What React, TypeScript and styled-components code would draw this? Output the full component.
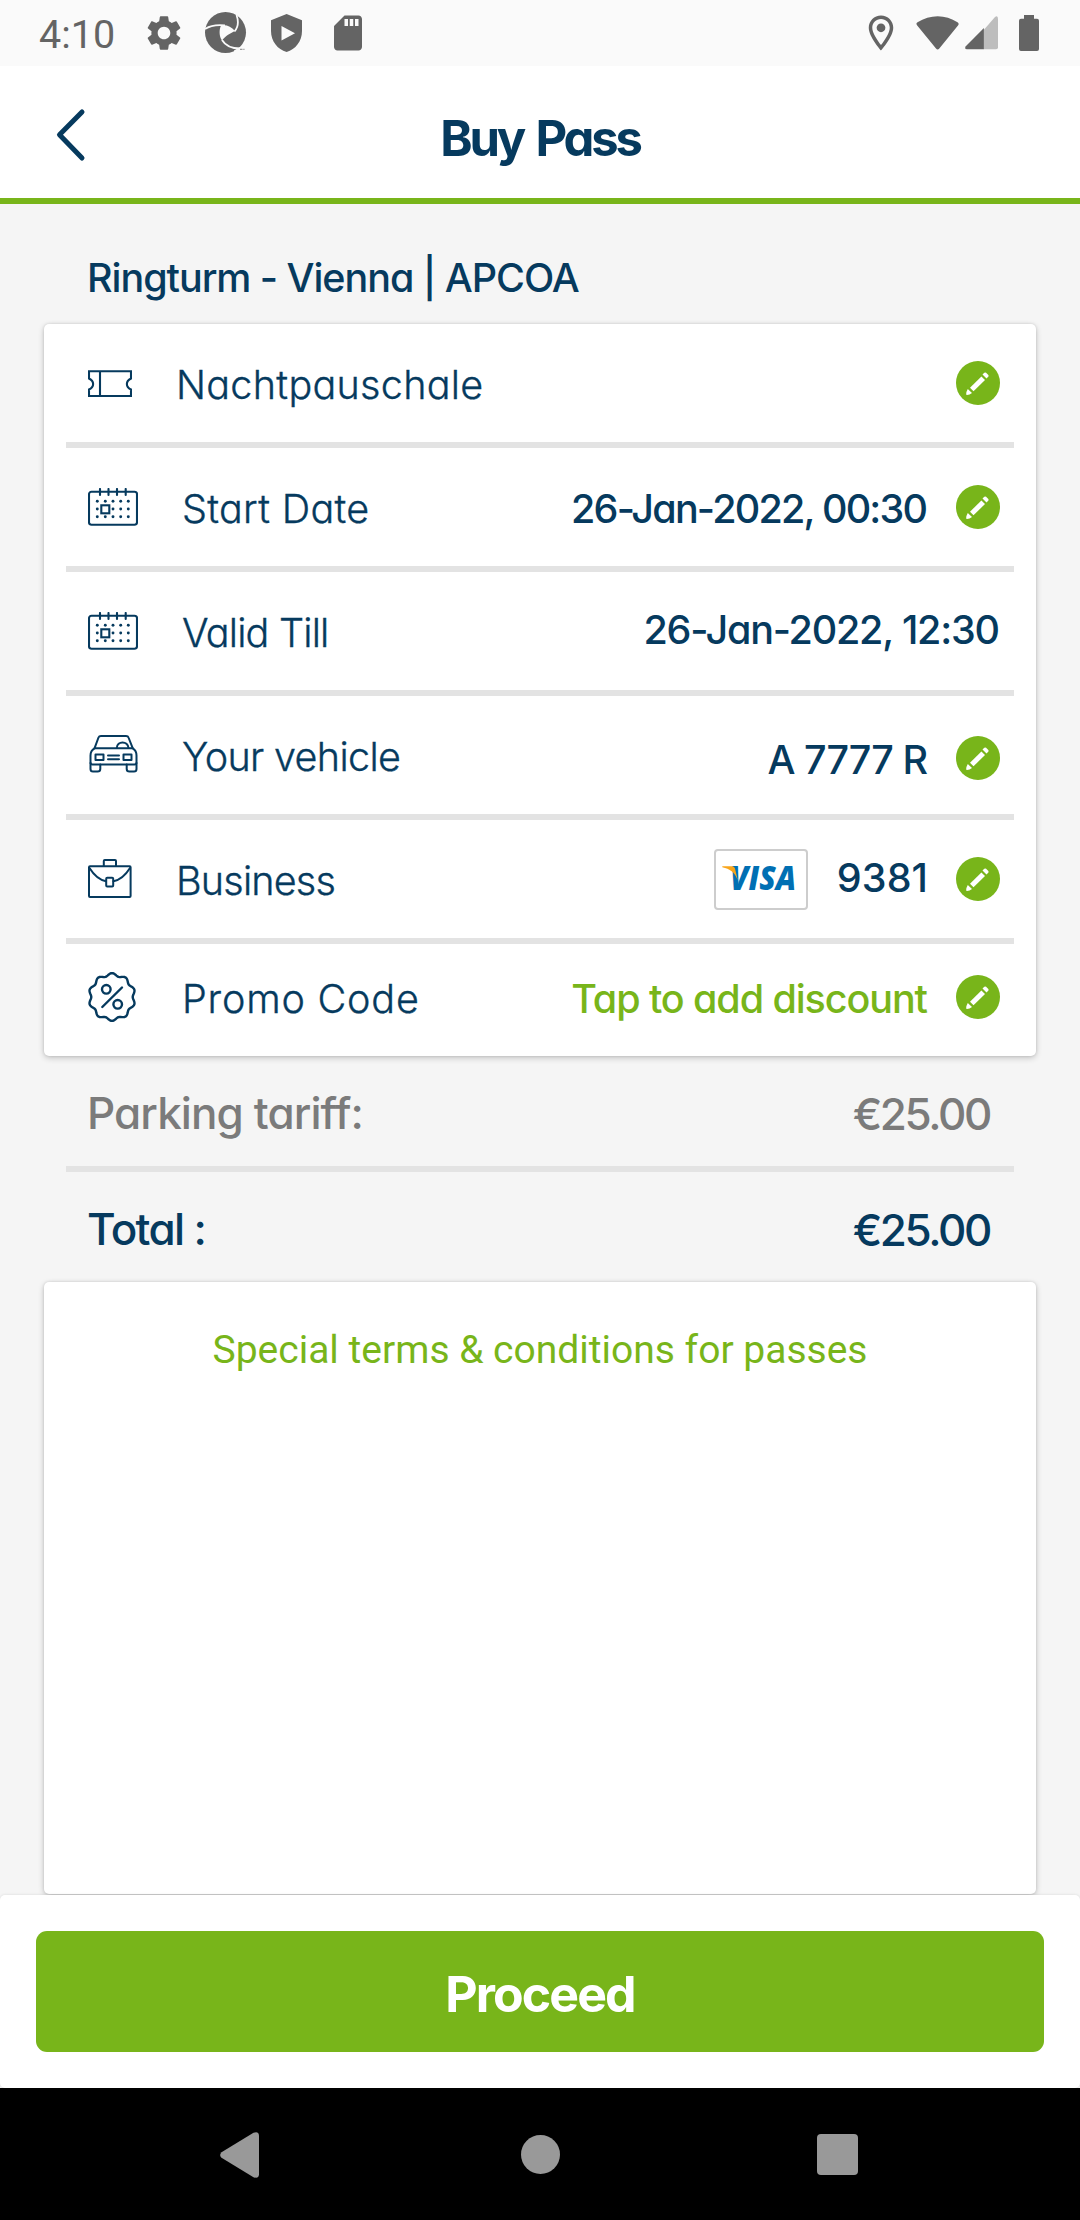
import React from "react";
import styled, { createGlobalStyle } from "styled-components";
import { MdSettings, MdSdCard, MdOutlineLocationOn } from "react-icons/md";

const navy = "#063a5e";
const green = "#78b51a";
const statusGrey = "#646464";

const GlobalStyle = createGlobalStyle`
  *, *::before, *::after { box-sizing: border-box; }
  body { margin: 0; background: #f5f5f5; }
  svg { display: block; flex: none; }
`;

const Screen = styled.div`
  width: 1080px;
  height: 2220px;
  display: flex;
  flex-direction: column;
  overflow: hidden;
  background: #f5f5f5;
  color: ${navy};
  font-family: Inter, "Open Sans", sans-serif;
  font-feature-settings: "cv11";
`;

const StatusBar = styled.div`
  height: 66px;
  flex: none;
  display: flex;
  justify-content: space-between;
  align-items: center;
  padding: 0 41px 0 39px;
  background: #fafafa;
  color: ${statusGrey};
`;

const StatusGroup = styled.div`
  display: flex;
  align-items: center;
`;

const Clock = styled.div`
  width: 104px;
  font: 400 39.5px/48px Roboto, sans-serif;
  padding-top: 3px;
`;

const StatusIcon = styled.span<{ $ml?: number }>`
  display: flex;
  margin-left: ${(p) => p.$ml ?? 0}px;
`;

const Header = styled.header`
  height: 138px;
  flex: none;
  display: grid;
  grid-template-columns: 140px 1fr 140px;
  align-items: start;
  background: #fff;
  border-bottom: 6px solid ${green};
`;

const BackButton = styled.button`
  padding: 41px 0 0 54px;
  border: 0;
  background: none;
`;

const Title = styled.h1`
  margin: 49px 0 0;
  text-align: center;
  font-size: 49px;
  line-height: 48px;
  font-weight: 650;
  letter-spacing: -3.2px;
  word-spacing: 4px;
`;

const Content = styled.main`
  flex: 1;
  min-height: 0;
  display: flex;
  flex-direction: column;
  padding: 0 44px;
`;

const Location = styled.h2`
  height: 120px;
  flex: none;
  margin: 0;
  padding: 50px 43px 0;
  font-size: 39.5px;
  line-height: 48px;
  font-weight: 500;
  letter-spacing: -1.06px;
`;

const Card = styled.section<{ $grow?: boolean }>`
  flex: ${(p) => (p.$grow ? "1" : "none")};
  margin-bottom: ${(p) => (p.$grow ? "1px" : "0")};
  background: #fff;
  border-radius: 5px;
  box-shadow: 0 2px 6px rgba(0, 0, 0, 0.2), 0 0 3px rgba(0, 0, 0, 0.12);
`;

const Row = styled.div<{ $last?: boolean }>`
  height: ${(p) => (p.$last ? 112 : 118)}px;
  display: flex;
  align-items: flex-start;
  padding: 0 36px 0 44px;
`;

const Divider = styled.hr`
  height: 6px;
  flex: none;
  margin: 0 22px;
  border: 0;
  background: #e3e3e3;
`;

const Slot = styled.span<{ $top: number }>`
  display: flex;
  flex: none;
  margin-top: ${(p) => p.$top}px;
`;

const Label = styled.span<{ $top: number; $spacing: number }>`
  flex: 1;
  margin: ${(p) => p.$top}px 0 0 44px;
  font-size: 39.5px;
  line-height: 48px;
  font-weight: 300;
  -webkit-text-stroke: 0.35px ${navy};
  letter-spacing: ${(p) => p.$spacing}px;
  white-space: nowrap;
`;

const Value = styled.span<{ $top: number; $spacing: number; $link?: boolean; $flush?: boolean }>`
  margin-top: ${(p) => p.$top}px;
  margin-right: ${(p) => (p.$flush ? 0 : 28) - p.$spacing}px;
  font-size: 39.5px;
  line-height: 48px;
  font-weight: 500;
  letter-spacing: ${(p) => p.$spacing}px;
  color: ${(p) => (p.$link ? green : navy)};
  white-space: nowrap;
`;

const CardBadge = styled.span`
  display: flex;
  margin: 29px 29px 0 0;
  width: 94px;
  height: 61px;
  border: 2px solid #cdcdcd;
  border-radius: 4px;
`;

const PriceRow = styled.div<{ $muted?: boolean }>`
  height: 110px;
  flex: none;
  display: flex;
  justify-content: space-between;
  padding: 33px 46px 0 43px;
  font-size: 44px;
  line-height: 48px;
  font-weight: 500;
  color: ${(p) => (p.$muted ? "#7b7b7b" : navy)};
`;

const PriceLabel = styled.span<{ $spacing: number }>`
  letter-spacing: ${(p) => p.$spacing}px;
`;

const Price = styled.span`
  padding-top: 1px;
  letter-spacing: -2.4px;
`;

const Terms = styled.a`
  display: block;
  padding-top: 44px;
  text-align: center;
  font: 400 39px/48px Roboto, sans-serif;
  color: ${green};
`;

const ActionBar = styled.footer`
  height: 193px;
  flex: none;
  padding: 36px;
  background: #fff;
  border-radius: 5px;
  box-shadow: 0 0 3px rgba(0, 0, 0, 0.12);
`;

const ProceedButton = styled.button`
  display: block;
  width: 100%;
  height: 121px;
  padding: 5px 0 0;
  border: 0;
  border-radius: 11px;
  background: ${green};
  color: #fff;
  font-family: inherit;
  font-feature-settings: inherit;
  font-size: 50px;
  line-height: 48px;
  font-weight: 650;
  letter-spacing: -1.9px;
`;

const NavBar = styled.nav`
  height: 132px;
  flex: none;
  display: flex;
  align-items: center;
  padding: 1px 0 0 220px;
  background: #000;
`;

const NavKey = styled.span<{ $ml?: number }>`
  display: flex;
  margin-left: ${(p) => p.$ml ?? 0}px;
`;

const PinwheelIcon = () => (
  <svg width="42" height="42" viewBox="0 0 42 42" fill="none">
    <circle cx="20.5" cy="20.5" r="20.5" fill={statusGrey} />
    <path d="M16 13.5C21 12.5 26 14 30 19C26 21 20 24 17 28.5C14 24 14 18 16 13.5Z" fill="#fafafa" />
    <path d="M0 17C5 13.5 12 12.5 20 13.3M31.5 3C34 10 32.5 16 29.5 19.5M35 36.5C26 36.5 20 33 17 28" stroke="#fafafa" strokeWidth="1.8" />
    <path d="M29 38.500L36 34.500L42 36V42H29Z" fill="#fafafa" />
    <path d="M35 37.300H37.500M38.300 37.300H39.500" stroke="#999" strokeWidth="1.2" />
  </svg>
);

const ShieldIcon = () => (
  <svg width="32" height="38" viewBox="0 0 32 38">
    <path fillRule="evenodd" fill={statusGrey} d="M15.6 0L31 6.2V17C31 27 24.500 35.500 15.600 38C6.500 35.500 0 27 0 17V6.200ZM10.500 12V26.500L24 19.200Z" />
  </svg>
);

const WifiIcon = () => (
  <svg width="44" height="34" viewBox="0 0 44 34">
    <path fill={statusGrey} d="M1.200 9.500Q-0.500 7.500 1.500 6.200C14 -1.800 29.500 -1.800 41.500 6.200Q43.500 7.500 42 9.500L23.300 32.500Q21.600 34.300 20 32.500Z" />
  </svg>
);

const SignalIcon = () => (
  <svg width="34" height="34" viewBox="0 0 34 34">
    <path fill="#bdbdbd" d="M18.700 14L30 1Q33 -1 33 3V31.500Q33 33.300 31 33.300H18.700Z" />
    <path fill={statusGrey} d="M18.900 12V33.300H2Q-1 33 0.800 30.300Z" />
  </svg>
);

const BatteryIcon = () => (
  <svg width="20" height="36" viewBox="0 0 20 36">
    <path fill={statusGrey} d="M5 0H15V3.700H18Q20 3.700 20 5.700V34Q20 36 18 36H2Q0 36 0 34V5.700Q0 3.700 2 3.700H5Z" />
  </svg>
);

const line = { fill: "none", stroke: navy, strokeWidth: 2.1, strokeLinejoin: "round", strokeLinecap: "round" } as const;

const TicketIcon = () => (
  <svg width="44" height="27" viewBox="0 0 44 27" {...line}>
    <path d="M1 1.300H43V8.500C37.500 11 37.500 17 43 19.500V26H1V19.500C6.500 17 6.500 11 1 8.500ZM12 1.300V26" strokeLinejoin="miter" />
  </svg>
);

const CalendarIcon = () => (
  <svg width="50" height="38" viewBox="0 0 50 38" {...line}>
    <rect x="1" y="3.800" width="48" height="33" rx="2.500" />
    <path d="M12 1V7M20.500 1V7M29 1V7M37.700 1V7" />
    <rect x="13.300" y="17.300" width="8" height="8" strokeLinejoin="miter" />
    <g fill={navy} stroke="none">
      {[13.3, 21, 28.7].map((y) =>
        [9.3, 17.3, 25, 32.7, 40.3].map((x) => (x === 17.3 && y === 21 ? null : <circle key={`${x}-${y}`} cx={x} cy={y} r="1.450" />))
      )}
    </g>
  </svg>
);

const CarIcon = () => (
  <svg width="50" height="39" viewBox="-1.500 0 50 39" {...line} strokeWidth={2}>
    <path d="M5 14.300L9 3.500Q9.600 2 11.500 2H36.500Q38.500 2 39 3.500L43.300 14.300" />
    <path d="M5 14.300H43.300C46 16 47 18.500 47 21.500V28.500Q47 30.500 45 30.500H3Q1 30.500 1 28.500V21.500C1 18.500 2 16 5 14.300Z" />
    <path d="M27.300 14C27.500 6.500 38.500 6.500 39 14M18.500 21.500H29.500M18.500 25.300H29.500" />
    <rect x="6" y="20.600" width="8" height="5.400" />
    <rect x="34" y="20.600" width="8" height="5.400" />
    <path d="M1 29V35Q1 37.500 3.500 37.500H8Q10.800 37.500 10.800 35V30.500M47 29V35Q47 37.500 44.500 37.500H40Q37.200 37.500 37.200 35V30.500" />
  </svg>
);

const BriefcaseIcon = () => (
  <svg width="44" height="40" viewBox="0 0 44 40" {...line} strokeWidth={2}>
    <rect x="1" y="7.200" width="41.600" height="30.800" rx="1" />
    <path d="M15.800 7V2Q15.800 1 16.800 1H27Q28 1 28 2V7M1.500 9C6.500 17 11.500 21 18 22.200M42 9C37 17 32 21 25.500 22.200" />
    <rect x="18.200" y="18.800" width="7" height="8.800" rx="1" />
  </svg>
);

const badgeOutline =
  Array.from({ length: 120 }, (_, i) => {
    const a = (i / 120) * Math.PI * 2;
    const r = 22.1 + 1.4 * Math.cos(10 * a);
    return `${i ? "L" : "M"}${(24 + r * Math.sin(a)).toFixed(2)} ${(25 - r * 1.02 * Math.cos(a)).toFixed(2)}`;
  }).join("") + "Z";

const PromoIcon = () => (
  <svg width="50" height="50" viewBox="0 0 50 50" {...line} strokeWidth={2.4}>
    <path d={badgeOutline} />
    <circle cx="18.300" cy="17.300" r="4.300" />
    <circle cx="29.700" cy="32.300" r="4.300" />
    <path d="M14.300 35L34 15.500" />
  </svg>
);

const PencilIcon = () => (
  <svg width="44" height="44" viewBox="0 0 44 44">
    <circle cx="22" cy="22" r="22" fill={green} />
    <g fill="#fff">
      <path d="M14 26.700L25.400 15.500L29 19L17.500 30.300Z" />
      <path d="M26.500 13.500L28.300 11.800Q29.200 11 30.100 11.800L32.300 14Q33 14.900 32.200 15.800L30.500 17.500Z" />
      <path d="M11.800 28L16 32Q13.500 33.800 11 34Q10 33.800 10.200 33Q10.300 30.500 11.800 28Z" />
    </g>
  </svg>
);

const VisaLogo = () => (
  <svg width="90" height="57" viewBox="2 2 90 57">
    <text x="16" y="41" textLength="66" lengthAdjust="spacingAndGlyphs" fill="#006fb3" fontFamily="Open Sans, sans-serif" fontWeight="800" fontStyle="italic" fontSize="33">
      VISA
    </text>
    <path d="M8.300 17.200H17.500Q20.500 17.200 21 19.500L23.700 31C20.500 23 16 20 8.300 18.300Z" fill="#f9a51a" />
  </svg>
);

export default function App() {
  return (
    <Screen>
      <GlobalStyle />
      <StatusBar>
        <StatusGroup>
          <Clock>4:10</Clock>
          <StatusIcon><MdSettings size={42} /></StatusIcon>
          <StatusIcon $ml={20}><PinwheelIcon /></StatusIcon>
          <StatusIcon $ml={24}><ShieldIcon /></StatusIcon>
          <StatusIcon $ml={24}><MdSdCard size={42} /></StatusIcon>
        </StatusGroup>
        <StatusGroup>
          <StatusIcon><MdOutlineLocationOn size={42} /></StatusIcon>
          <StatusIcon $ml={14}><WifiIcon /></StatusIcon>
          <StatusIcon $ml={5}><SignalIcon /></StatusIcon>
          <StatusIcon $ml={20}><BatteryIcon /></StatusIcon>
        </StatusGroup>
      </StatusBar>

      <Header>
        <BackButton aria-label="Back">
          <svg width="33" height="56" viewBox="0 0 33 56" fill="none" stroke={navy} strokeWidth="5" strokeLinecap="round" strokeLinejoin="round">
            <path d="M28 5L5.500 27.800L28 51" />
          </svg>
        </BackButton>
        <Title>Buy Pass</Title>
      </Header>

      <Content>
        <Location>Ringturm - Vienna | APCOA</Location>
        <Card>
          <Row>
            <Slot $top={46}><TicketIcon /></Slot>
            <Label $top={37} $spacing={0.3}>Nachtpauschale</Label>
            <Slot $top={37}><PencilIcon /></Slot>
          </Row>
          <Divider />
          <Row>
            <Slot $top={40}><CalendarIcon /></Slot>
            <Label $top={37} $spacing={0.3}>Start Date</Label>
            <Value $top={37} $spacing={-1.8}>26-Jan-2022, 00:30</Value>
            <Slot $top={37}><PencilIcon /></Slot>
          </Row>
          <Divider />
          <Row>
            <Slot $top={40}><CalendarIcon /></Slot>
            <Label $top={37} $spacing={-0.8}>Valid Till</Label>
            <Value $top={34} $spacing={-1.22} $flush>26-Jan-2022, 12:30</Value>
          </Row>
          <Divider />
          <Row>
            <Slot $top={38}><CarIcon /></Slot>
            <Label $top={37} $spacing={-0.65}>Your vehicle</Label>
            <Value $top={40} $spacing={-0.95}>A 7777 R</Value>
            <Slot $top={40}><PencilIcon /></Slot>
          </Row>
          <Divider />
          <Row>
            <Slot $top={39}><BriefcaseIcon /></Slot>
            <Label $top={37} $spacing={-0.8}>Business</Label>
            <CardBadge><VisaLogo /></CardBadge>
            <Value $top={34} $spacing={0.1}>9381</Value>
            <Slot $top={37}><PencilIcon /></Slot>
          </Row>
          <Divider />
          <Row $last>
            <Slot $top={28}><PromoIcon /></Slot>
            <Label $top={31} $spacing={0.8}>Promo Code</Label>
            <Value $top={31} $spacing={-1.1} $link>Tap to add discount</Value>
            <Slot $top={31}><PencilIcon /></Slot>
          </Row>
        </Card>

        <PriceRow $muted>
          <PriceLabel $spacing={-0.9}>Parking tariff:</PriceLabel>
          <Price>€25.00</Price>
        </PriceRow>
        <Divider />
        <PriceRow>
          <PriceLabel $spacing={-1.65}>Total :</PriceLabel>
          <Price>€25.00</Price>
        </PriceRow>

        <Card $grow>
          <Terms>Special terms &amp; conditions for passes</Terms>
        </Card>
      </Content>

      <ActionBar>
        <ProceedButton>Proceed</ProceedButton>
      </ActionBar>

      <NavBar>
        <NavKey>
          <svg width="39" height="46" viewBox="0 0 39 46">
            <path fill="#999" d="M1.500 20.200L33.500 0.800Q38.500 -1 39 3.500V42.500Q38.500 47 33.500 45.200L1.500 25.800Q-1.200 23 1.500 20.200Z" />
          </svg>
        </NavKey>
        <NavKey $ml={262}>
          <svg width="39" height="39" viewBox="0 0 39 39"><circle cx="19.500" cy="19.500" r="19.500" fill="#999" /></svg>
        </NavKey>
        <NavKey $ml={257}>
          <svg width="41" height="41" viewBox="0 0 41 41"><rect width="41" height="41" rx="4" fill="#999" /></svg>
        </NavKey>
      </NavBar>
    </Screen>
  );
}
